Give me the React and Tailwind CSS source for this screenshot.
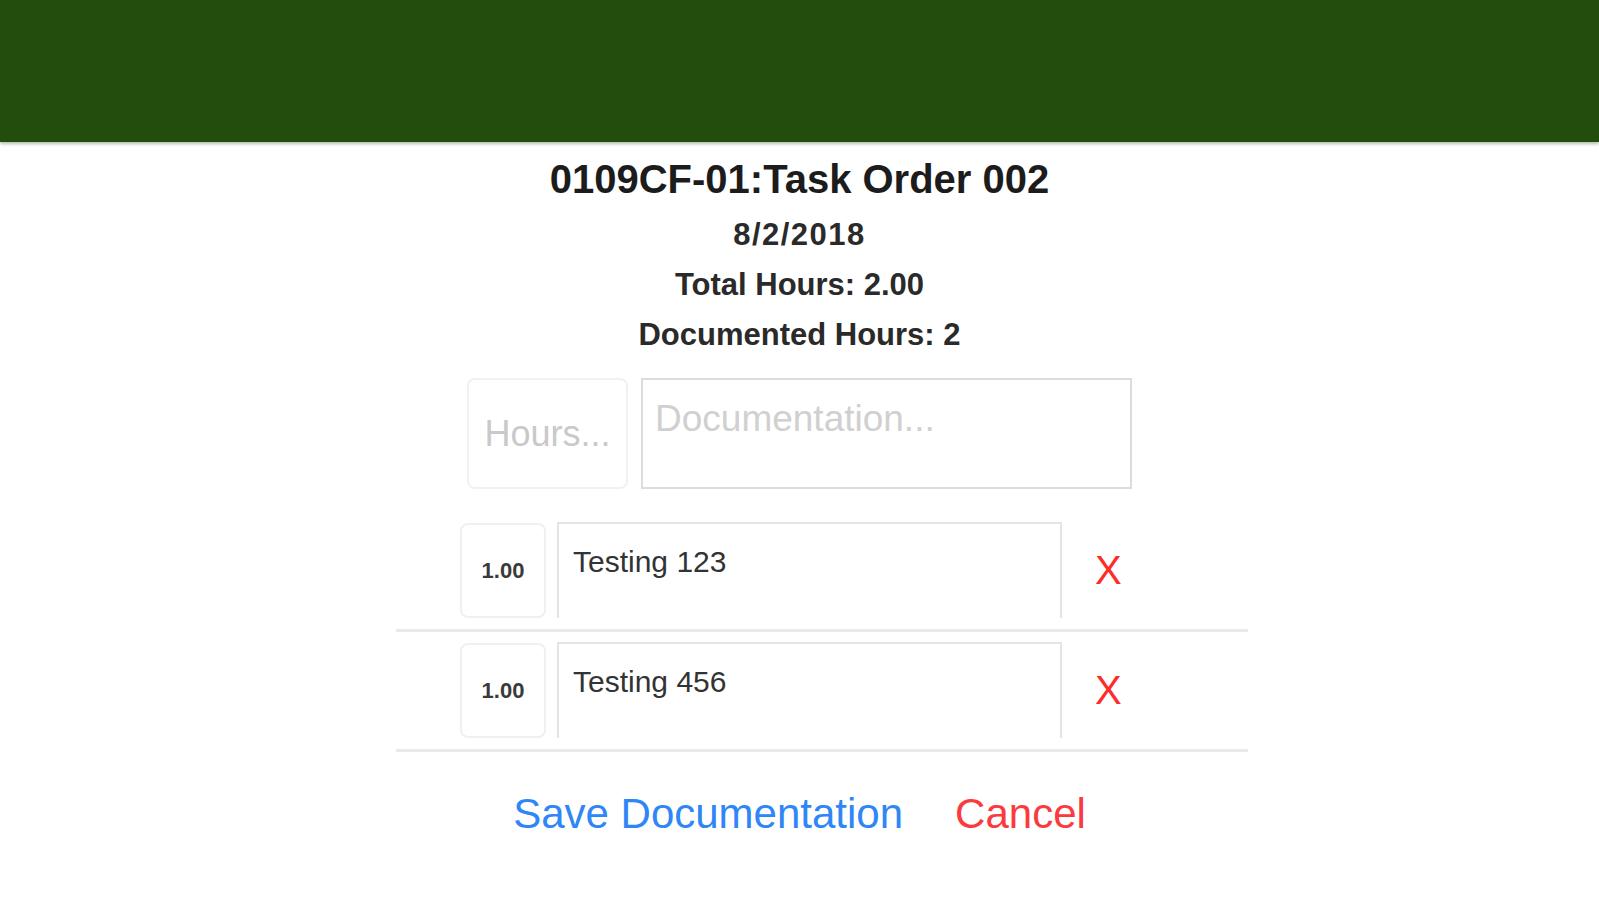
import React, { useState } from 'react';

const entries = [
  { id: 1, hours: '1.00', text: 'Testing 123' },
  { id: 2, hours: '1.00', text: 'Testing 456' },
];

export default function App() {
  const [hours, setHours] = useState('');
  const [doc, setDoc] = useState('');
  const [rows, setRows] = useState(entries);

  return (
    <div className="min-h-screen bg-white font-['Liberation_Sans',Arial,sans-serif] text-[#222]">
      <div className="h-[142px] bg-[#234d0c] shadow-[0_2px_3px_rgba(35,77,12,0.35)]" />

      <div className="pt-[12px] flex flex-col items-center">
        <h1 className="text-[40px] leading-[50px] font-bold text-[#1c1c1c]">0109CF-01:Task Order 002</h1>
        <div className="mt-[6px] text-[31px] leading-[50px] font-bold tracking-[1.5px] text-[#2a2a2a]">8/2/2018</div>
        <div className="text-[31px] leading-[50px] font-bold text-[#2a2a2a]">Total Hours: 2.00</div>
        <div className="text-[31px] leading-[50px] font-bold text-[#2a2a2a]">Documented Hours: 2</div>

        <div className="mt-[18px] flex gap-[13px]">
          <input
            value={hours}
            onChange={e => setHours(e.target.value)}
            placeholder="Hours..."
            className="w-[161px] h-[111px] rounded-[8px] border-2 border-[#f1f1f1] text-center text-[36px] outline-none placeholder:text-[#c9c9c9]"
          />
          <textarea
            value={doc}
            onChange={e => setDoc(e.target.value)}
            placeholder="Documentation..."
            className="w-[491px] h-[111px] border-2 border-[#dcdcdc] pl-[12px] pt-[17px] text-[37px] leading-[44px] resize-none outline-none placeholder:text-[#d0d0d0]"
          />
        </div>
      </div>

      <div className="ml-[396px] w-[852px] mt-[23px]">
        {rows.map(r => (
          <div key={r.id} className="border-b-[3px] border-[#e9e9e9]">
            <div className="pt-[10px] pb-[11px] pl-[64px] flex items-center">
              <div className="w-[86px] h-[95px] rounded-[8px] border-2 border-[#f0f0f0] flex items-center justify-center text-[22px] font-bold text-[#3a3a3a]">
                {r.hours}
              </div>
              <div className="ml-[11px] w-[505px] h-[96px] border-t-2 border-x-2 border-[#e4e4e4] pl-[14px] pt-[20px] text-[30px] leading-[36px] text-[#333]">
                {r.text}
              </div>
              <button
                onClick={() => setRows(rows.filter(x => x.id !== r.id))}
                className="ml-[33px] text-[40px] leading-none text-[#ff2a2a]"
              >
                X
              </button>
            </div>
          </div>
        ))}
      </div>

      <div className="mt-[37px] flex justify-center gap-[52px] text-[42px] leading-[50px]">
        <button className="text-[#2f86f6]">Save Documentation</button>
        <button className="text-[#fb3a3f]">Cancel</button>
      </div>
    </div>
  );
}
